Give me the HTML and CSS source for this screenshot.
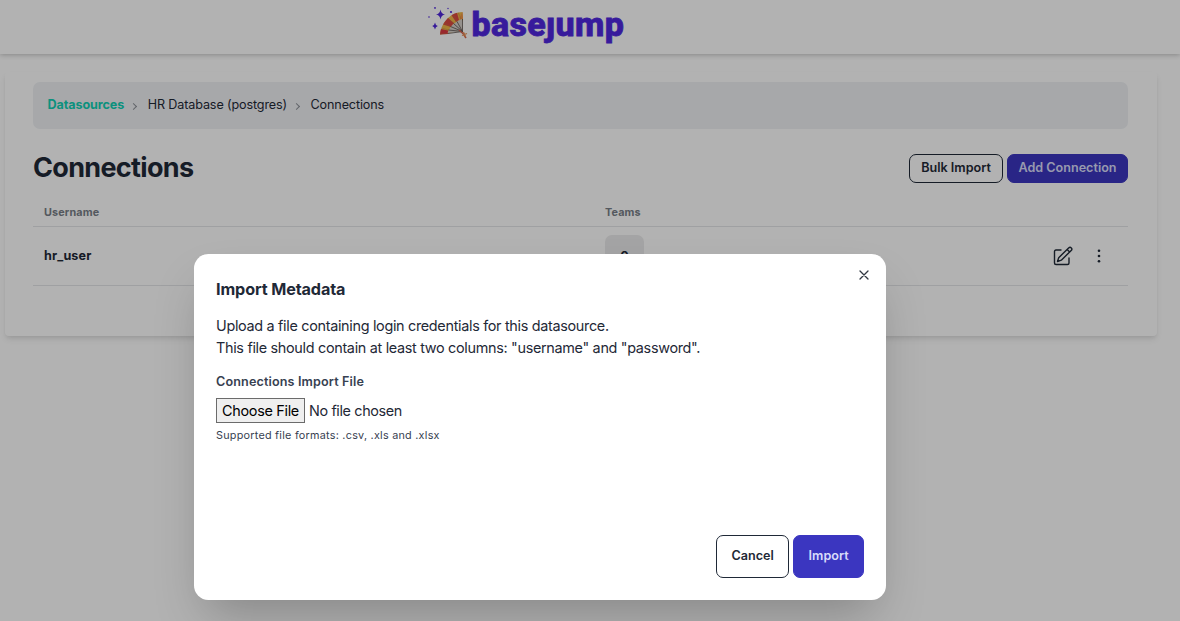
FILE: index.html
```html
<!DOCTYPE html>
<html lang="en">
<head>
<meta charset="utf-8">
<title>Basejump</title>
<link rel="stylesheet" href="styles.css">
</head>
<body>
<header class="topbar">
  <div class="logo">
    <svg class="logo-mark" viewBox="0 0 42 34" width="42" height="34">
      <g fill="#5028dc">
        <path d="M12.5 2.5Q13.2 6.8 17 7.5Q13.2 8.2 12.5 12.500Q11.800 8.200 8 7.500Q11.800 6.800 12.500 2.500Z"/>
        <path d="M7 15.500Q7.500 18.500 9.800 19Q7.500 19.500 7 22.500Q6.500 19.500 4.200 19Q6.500 18.500 7 15.500Z"/>
        <circle cx="7" cy=".9" r=".9"/><circle cx="1" cy="10" r=".8"/><circle cx="20" cy="1.500" r=".7"/><circle cx="23" cy="5" r="1.100"/>
      </g>
      <path d="M12 27.500Q13 18 20 11Q26 5.500 34.500 5L35 12L31 24Z" fill="#f0b848"/>
      <path d="M12 27.500Q12.300 24.500 13 22L20 23.500L20 27Z" fill="#dc3a42"/>
      <path d="M15 17.500Q17 14 20 11L26 16L23 20Z" fill="#dc4a43"/>
      <path d="M23.500 8.300Q26 6.500 29 5.800L31 13L28 15Z" fill="#dc4a43"/>
      <path d="M34.500 5L35 12L33 14L31.500 10.500Z" fill="#ef9448"/>
      <path d="M19.500 26Q23 16 34 12L34.300 24Z" fill="#d6d0ca"/>
      <path d="M34.500 24.500L20 26.500M34.500 24.500L20.500 23M34.500 24.500L22.500 19.500M34.500 24.500L25.500 16.500M34.500 24.500L29 14.500M34.500 24.500V12" fill="none" stroke="#59504b" stroke-width=".8"/>
      <path d="M20 26.500L12 27M20.500 23L13.500 21M22.500 19.500L16 16M25.500 16.500L20 11M29 14.500L25 7.500M33 12L30 5.500" fill="none" stroke="#b97b3c" stroke-width=".4"/>
      <path d="M31 23L35.500 27L38 31" fill="none" stroke="#d3604c" stroke-width="1.600"/>
      <path d="M34 28.500L39 26.500M35.500 25L37.500 30" stroke="#e79155" stroke-width="1.200"/>
    </svg>
    <span class="wordmark">base<span class="letter-j">j</span>ump</span>
  </div>
</header>
<main class="card">
  <nav class="crumbs">
    <a class="crumb-link">Datasources</a><i class="chevron"></i><span>HR Database (postgres)</span><i class="chevron"></i><span>Connections</span>
  </nav>
  <div class="heading">
    <h1>Connections</h1>
    <div class="actions">
      <button class="btn btn-sm btn-outline">Bulk Import</button>
      <button class="btn btn-sm btn-primary">Add Connection</button>
    </div>
  </div>
  <div class="table">
    <div class="row head"><span>Username</span><span>Teams</span><span></span></div>
    <div class="row">
      <b>hr_user</b>
      <span><b class="count">0</b></span>
      <span class="row-tools">
        <svg class="edit" viewBox="0 0 20 20" width="20" height="20" fill="none" stroke="#1f2937" stroke-width="1.400" stroke-linecap="round" stroke-linejoin="round"><path d="M8 4H3Q1.500 4 1.500 5.500V17Q1.500 18.500 3 18.500H14.500Q16 18.500 16 17V12M15.600 2Q17 .700 18.300 1.900Q19.500 3.200 18.200 4.500L8.300 14.200L4.500 15.500L5.700 11.700ZM14.100 3.500L16.700 6"/></svg>
        <svg class="dots" viewBox="0 0 4 16" width="4" height="16" fill="#1f2937"><circle cx="2" cy="2.700" r="1.300"/><circle cx="2" cy="8" r="1.300"/><circle cx="2" cy="13.300" r="1.300"/></svg>
      </span>
    </div>
  </div>
</main>
<div class="overlay">
  <section class="modal">
    <button class="close" aria-label="Close"><svg viewBox="0 0 10 10" width="10" height="10"><path d="M1 1L9 9M9 1L1 9" stroke="#303741" stroke-width="1.300" stroke-linecap="round"/></svg></button>
    <h2>Import Metadata</h2>
    <p>Upload a file containing login credentials for this datasource.<br>This file should contain at least two columns: "username" and "password".</p>
    <div class="label">Connections Import File</div>
    <div class="file"><button class="choose">Choose File</button><span>No file chosen</span></div>
    <div class="hint">Supported file formats: .csv, .xls and .xlsx</div>
    <footer class="modal-actions">
      <button class="btn btn-outline">Cancel</button>
      <button class="btn btn-primary">Import</button>
    </footer>
  </section>
</div>
</body>
</html>
```
FILE: styles.css
```css
* { box-sizing: border-box; }
html { font-size: 14.4px; }
body { margin: 0; height: 621px; overflow: hidden; background: #fff; color: #1f2937; font-family: Inter, sans-serif; line-height: 1.5; }
button { font-family: inherit; margin: 0; }
h1, h2, p { margin: 0; }
.topbar { height: 54px; background: #fff; box-shadow: 0 1px 5px rgba(0,0,0,.24); display: flex; padding-left: 427.5px; }
.logo { display: flex; align-items: flex-start; padding-top: 7px; }
.logo-mark { flex: none; margin-right: 2px; }
.wordmark { font: 800 34px/34px Roboto, sans-serif; letter-spacing: .35px; color: #5028e0; -webkit-text-stroke: .8px #5028e0; white-space: nowrap; }
.letter-j { display: inline-block; clip-path: inset(10px -5px -5px -8px); }
.card { width: 1152px; height: 264px; margin: 18px 0 0 5px; padding: 10px 29px 0 28px; border-radius: 4px; box-shadow: 0 4px 6px -1px rgba(0,0,0,.1), 0 2px 4px -1px rgba(0,0,0,.06); }
.crumbs { height: 47px; border-radius: 7px; background: #eff1f4; display: flex; align-items: center; padding: 0 14.5px 1px; font-size: 12.6px; letter-spacing: -.13px; }
.crumb-link { color: #12d0b4; font-weight: 700; letter-spacing: -.1px; }
.chevron { width: 5px; height: 5px; margin: 2px 12px 0 6.5px; border: solid #8d9198; border-width: 1px 1px 0 0; transform: rotate(45deg); }
.heading { display: flex; align-items: center; justify-content: space-between; height: 40px; margin-top: 19px; }
h1 { font-size: 27px; line-height: 36px; font-weight: 700; letter-spacing: -.68px; }
.actions { display: flex; gap: 4px; }
.btn { height: 43px; padding: 0 14.4px; border: 1px solid #1f2937; border-radius: 7px; font-size: 12.6px; font-weight: 600; line-height: 1; color: #1f2937; background: transparent; }
.btn-sm { width: 94px; height: 29px; padding: 0; }
.btn-sm.btn-primary { width: 121px; }
.btn-primary { color: #d9dcfa; border-color: #3b36c0; background: #3b36c0; }
.row { display: grid; grid-template-columns: 561px 1fr 85px; align-items: center; height: 59px; padding: 0 11px; border-bottom: 1px solid #e4e5e8; font-size: 12.6px; letter-spacing: .14px; }
.head { height: 39px; padding-top: 13px; font-size: 10.8px; font-weight: 700; color: #797f88; }
.count { display: flex; align-items: center; justify-content: center; width: 39px; height: 42px; padding-top: 2px; border-radius: 7px; background: #ebebec; }
.row-tools { display: flex; align-items: center; padding-left: 21px; gap: 24px; }
.overlay { position: absolute; inset: 0; display: flex; padding: 254px 0 0 194px; background: rgba(0,0,0,.3); overflow: hidden; }
.modal { position: relative; display: flex; flex-direction: column; width: 692px; height: 346px; padding: 22px; border-radius: 14.4px; background: #fff; box-shadow: 0 25px 50px -12px rgba(0,0,0,.25); }
.close { position: absolute; right: 17px; top: 15.5px; display: flex; padding: 0; width: 10px; height: 10px; border: 0; background: none; }
h2 { font-size: 16.2px; line-height: 26px; font-weight: 700; letter-spacing: -.13px; }
p { margin-top: 13px; font-size: 14.4px; line-height: 21.6px; letter-spacing: -.31px; }
.label { margin-top: 15px; font-size: 12.6px; line-height: 18px; font-weight: 600; color: #374151; letter-spacing: .13px; }
.file { display: flex; align-items: center; gap: 4px; margin-top: 7px; font-size: 14.4px; letter-spacing: -.37px; }
.choose { height: 25px; width: 89px; padding: 0; border: 1px solid #6b6b6b; background: #efefef; color: #000; font-size: 14.4px; letter-spacing: -.3px; }
.hint { margin-top: 5px; font-size: 10.8px; line-height: 16px; color: #374151; letter-spacing: .25px; }
.modal-actions { display: flex; justify-content: flex-end; gap: 4px; margin-top: auto; }
```
